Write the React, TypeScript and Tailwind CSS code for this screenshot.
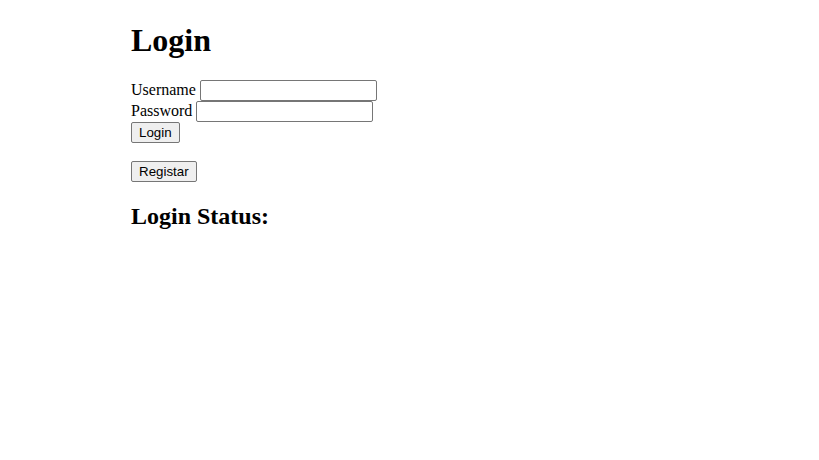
export default function App() {
  return (
    <div className="min-h-[460px] w-full bg-white text-black font-['Liberation_Serif',serif]">
      <div className="pl-[131px] flex flex-col items-start">
        <h1 className="mt-[22px] mb-[20px] text-[32px] font-bold leading-[37px]">Login</h1>

        {/* form rows */}
        <div className="flex items-center h-[21px] text-[16px] mt-[1px]">
          <span className="-mt-[2px]">Username</span>
          <input
            type="text"
            className="ml-[4px] w-[177px] h-[21px] border border-[#767676] rounded-[2px] bg-white px-[2px] text-[13px]"
          />
        </div>
        <div className="flex items-center h-[21px] text-[16px]">
          <span className="-mt-[2px]">Password</span>
          <input
            type="password"
            className="ml-[4px] w-[177px] h-[21px] border border-[#767676] rounded-[2px] bg-white px-[2px] text-[13px]"
          />
        </div>
        <button className="h-[21px] px-[7px] bg-[#efefef] border border-[#767676] rounded-[2px] text-[13.33px] leading-none font-['Liberation_Sans',sans-serif]">
          Login
        </button>

        <button className="mt-[18px] h-[21px] px-[7px] bg-[#efefef] border border-[#767676] rounded-[2px] text-[13.33px] leading-none font-['Liberation_Sans',sans-serif]">
          Registar
        </button>

        <h2 className="mt-[20px] text-[24px] font-bold leading-[28px]">Login Status:</h2>
      </div>
    </div>
  );
}
